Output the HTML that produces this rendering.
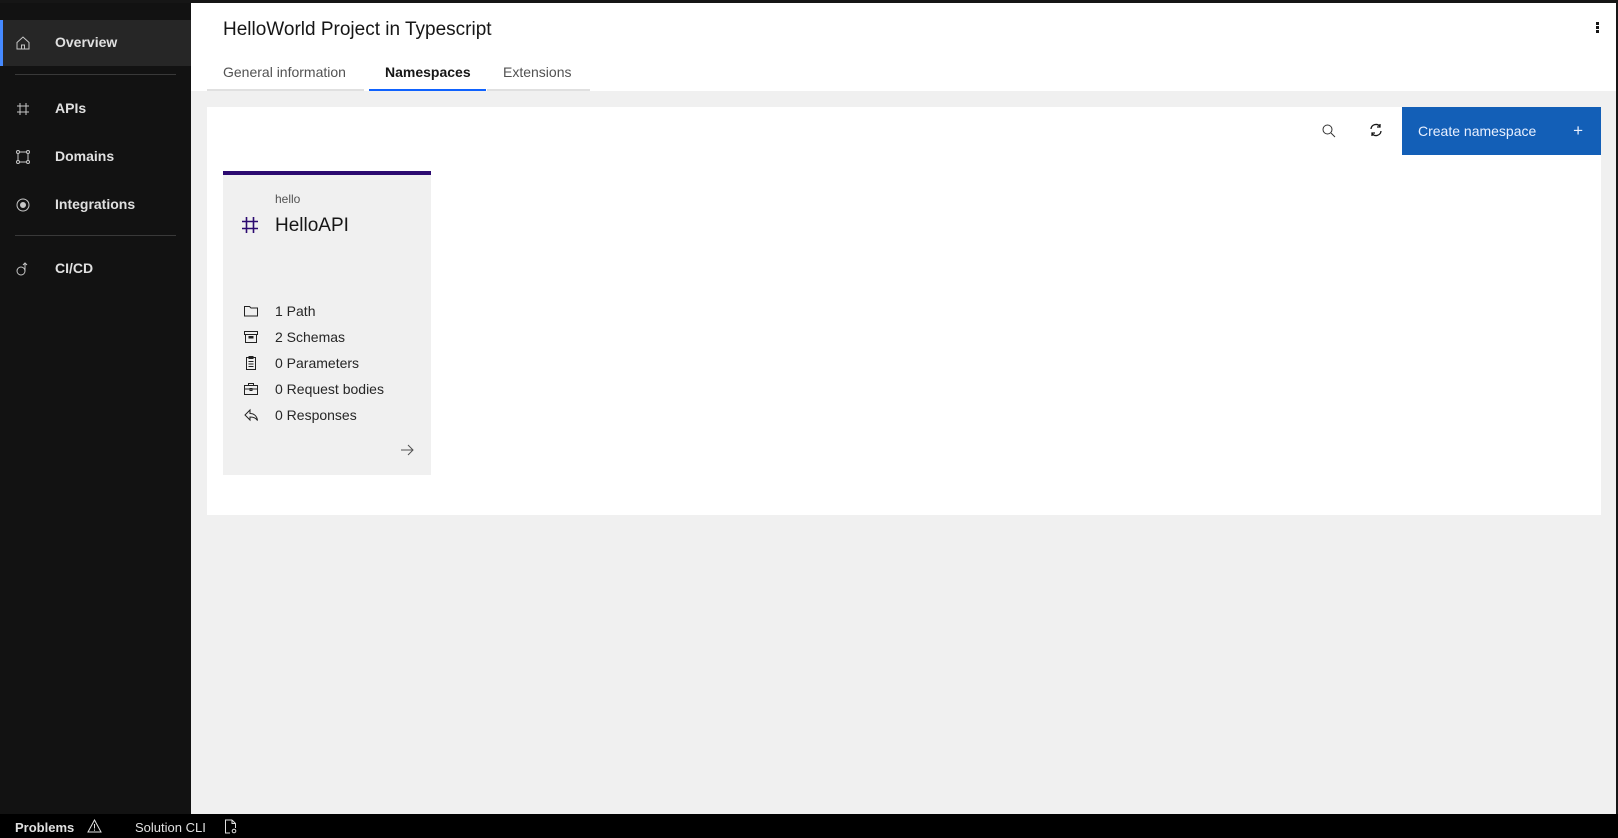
<!DOCTYPE html>
<html><head><style>
*{box-sizing:border-box;margin:0;padding:0}
body{width:1618px;height:838px;overflow:hidden;background:#161616;font-family:"Liberation Sans",sans-serif;position:relative}
.side{position:absolute;left:0;top:3px;width:191px;height:811px;background:#121212}
.nav{position:absolute;left:0;width:191px;height:48px;color:#e0e0e0;font-size:14px;font-weight:bold}
.nav span{position:absolute;left:55px;top:14px}
.nav svg{position:absolute;left:15px;top:15px}
.sep{position:absolute;left:15px;width:161px;height:1px;background:#393939}
.main{position:absolute;left:191px;top:3px;width:1425px;height:811px;background:#f0f0f0}
.hdr{position:absolute;left:0;top:0;width:1425px;height:88px;background:#fff}
.title{position:absolute;left:32px;top:16px;font-size:19px;color:#161616}
.tab{position:absolute;top:49px;height:39px;font-size:14px;color:#525252;border-bottom:2px solid #e0e0e0;padding:12px 16px 0}
.panel{position:absolute;left:16px;top:104px;width:1394px;height:408px;background:#fff}
.card{position:absolute;left:16px;top:64px;width:208px;height:304px;background:#f0f0f0;border-top:4px solid #2c0a70}
.row{position:absolute;left:52px;font-size:14px;color:#262626}
.ri{position:absolute;left:-32px;top:0}
.btn{position:absolute;right:0;top:0;width:199px;height:48px;background:#135fb7;color:#e8f0ff;font-size:14px}
.bar{position:absolute;left:0;top:814px;width:1618px;height:24px;background:#000;color:#e0e0e0;font-size:13px}
</style></head><body>
<div class="side">
 <div class="nav" style="top:17px;background:#262626;border-left:3px solid #4589ff;height:46px"><svg width="16" height="16" viewBox="0 0 16 16" style="left:12px" fill="none" stroke="#c6c6c6"><path d="M2 7.5L8 2l6 5.5V14H2z M6.5 14V10h3v4"/></svg><span style="left:52px">Overview</span></div>
 <div class="sep" style="top:71px"></div>
 <div class="nav" style="top:83px"><svg width="16" height="16" viewBox="0 0 16 16" stroke="#c6c6c6" fill="none"><path d="M5 2v12M11 2v12M2 5h12M2 11h12"/></svg><span>APIs</span></div>
 <div class="nav" style="top:131px"><svg width="16" height="16" viewBox="0 0 16 16" stroke="#c6c6c6" fill="none"><rect x="3" y="3" width="10" height="10"/><circle cx="3" cy="3" r="1.5" fill="#121212"/><circle cx="13" cy="3" r="1.5" fill="#121212"/><circle cx="3" cy="13" r="1.5" fill="#121212"/><circle cx="13" cy="13" r="1.5" fill="#121212"/></svg><span>Domains</span></div>
 <div class="nav" style="top:179px"><svg width="16" height="16" viewBox="0 0 16 16" stroke="#c6c6c6" fill="none"><circle cx="8" cy="8" r="6"/><circle cx="8" cy="8" r="2.5" fill="#c6c6c6"/></svg><span>Integrations</span></div>
 <div class="sep" style="top:232px"></div>
 <div class="nav" style="top:243px"><svg width="16" height="16" viewBox="0 0 16 16" stroke="#c6c6c6" fill="none"><circle cx="6" cy="10" r="4"/><path d="M10 10V2M8 4l2-2 2 2"/></svg><span>CI/CD</span></div>
</div>
<div class="main">
 <div class="hdr">
  <div class="title">HelloWorld Project in Typescript</div>
  <div class="tab" style="left:16px;width:157px">General information</div>
  <div class="tab" style="left:178px;width:117px;color:#161616;font-weight:bold;border-bottom-color:#0f62fe">Namespaces</div>
  <div class="tab" style="left:296px;width:103px">Extensions</div>
  <div style="position:absolute;right:17px;top:19px;width:3px">
   <div style="width:3px;height:3px;background:#161616;margin-bottom:1px"></div><div style="width:3px;height:3px;background:#161616;margin-bottom:1px"></div><div style="width:3px;height:3px;background:#161616"></div></div>
 </div>
 <div class="panel">
  <svg style="position:absolute;left:1114px;top:16px" width="16" height="16" viewBox="0 0 16 16" fill="none" stroke="#333"><circle cx="6.5" cy="6.5" r="4.5"/><path d="M10 10l4 4"/></svg>
  <svg style="position:absolute;left:1161px;top:15px" width="16" height="16" viewBox="0 0 16 16" fill="none" stroke="#161616" stroke-width="1.3"><path d="M3 7a5 5 0 0 1 9-2.5M13 9a5 5 0 0 1-9 2.5M12 2v3h-3M4 14v-3h3"/></svg>
  <div class="btn"><span style="position:absolute;left:16px;top:16px">Create namespace</span><span style="position:absolute;right:18px;top:14px;font-size:17px">+</span></div>
  <div class="card">
   <div style="position:absolute;left:52px;top:17px;font-size:12px;color:#525252">hello</div>
   <svg style="position:absolute;left:18px;top:41px" width="18" height="18" viewBox="0 0 18 18" stroke="#2c0a70" stroke-width="1.6" fill="none"><path d="M5.5 1v16M12.5 1v16M1 5.5h16M1 12.5h16"/></svg>
   <div style="position:absolute;left:52px;top:40px;font-size:19px;color:#161616">HelloAPI</div>
   <div class="row" style="top:128px"><svg class="ri" width="16" height="16" viewBox="0 0 16 16" fill="none" stroke="#222"><path d="M1.5 3.5h5l1.5 1.5h6.5v8h-13z"/></svg>1 Path</div>
   <div class="row" style="top:154px"><svg class="ri" width="16" height="16" viewBox="0 0 16 16" fill="none" stroke="#222"><rect x="1.5" y="2.5" width="13" height="3"/><path d="M2.5 5.5v8h11v-8"/><rect x="6" y="7.5" width="4" height="1.5" fill="#222"/></svg>2 Schemas</div>
   <div class="row" style="top:180px"><svg class="ri" width="16" height="16" viewBox="0 0 16 16" fill="none" stroke="#222"><rect x="3.5" y="2.5" width="9" height="12"/><rect x="6" y="1.5" width="4" height="2"/><path d="M5.5 6.5h5M5.5 9h5M5.5 11.5h5"/></svg>0 Parameters</div>
   <div class="row" style="top:206px"><svg class="ri" width="16" height="16" viewBox="0 0 16 16" fill="none" stroke="#222"><rect x="1.5" y="4.5" width="13" height="9"/><path d="M5.5 4.5v-2h5v2M1.5 8h13M7 7.5h2v2h-2z"/></svg>0 Request bodies</div>
   <div class="row" style="top:232px"><svg class="ri" width="16" height="16" viewBox="0 0 16 16" fill="none" stroke="#222"><path d="M7 3L2 8l5 5V10c4 0 6 1 7.5 3.5C14 9 11 6.5 7 6.5z"/></svg>0 Responses</div>
   <svg style="position:absolute;left:176px;top:267px" width="16" height="16" viewBox="0 0 16 16" fill="none" stroke="#525252"><path d="M2 8h12M9 3l5 5-5 5"/></svg>
  </div>
 </div>
</div>
<div class="bar">
 <span style="position:absolute;left:15px;top:6px;font-weight:bold">Problems</span>
 <svg style="position:absolute;left:87px;top:5px" width="15" height="14" viewBox="0 0 15 14" fill="none" stroke="#e0e0e0"><path d="M7.5 1L14 13H1z M7.5 5v4.5M7.5 10.5v1.2"/></svg>
 <span style="position:absolute;left:135px;top:6px">Solution CLI</span>
 <svg style="position:absolute;left:224px;top:5px" width="13" height="15" viewBox="0 0 13 15" fill="none" stroke="#e0e0e0"><path d="M8 1H1.5v13H6M8 1l3.5 3.5V9M8 1v3.5h3.5"/><circle cx="10" cy="12" r="1.8"/></svg>
</div>
</body></html>
